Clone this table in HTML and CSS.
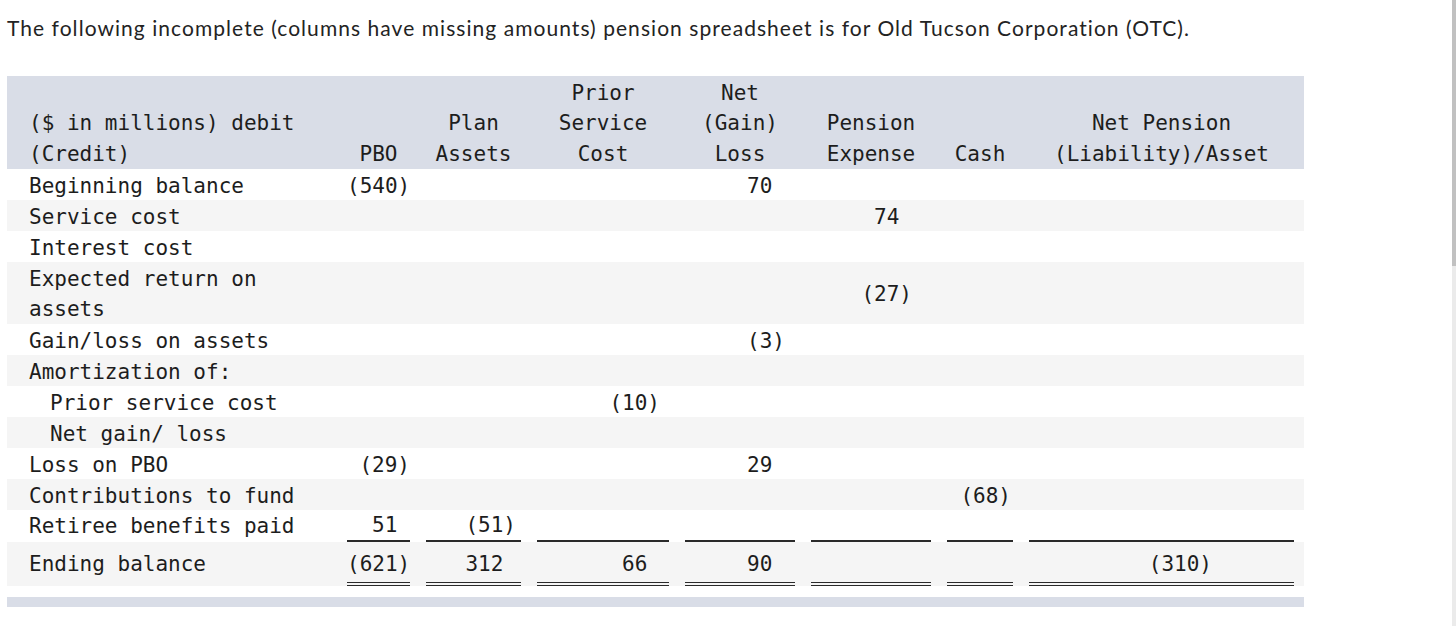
FILE: index.html
```html
<!DOCTYPE html>
<html lang="en">
<head>
<meta charset="utf-8">
<title>OTC pension spreadsheet</title>
<link rel="stylesheet" href="styles.css">
</head>
<body>
<p class="intro">The following incomplete (columns have missing amounts) pension spreadsheet is for Old Tucson Corporation (OTC).</p>
<table class="sheet">
  <colgroup>
    <col class="w-label"><col class="w-pbo"><col class="w-plan"><col class="w-psc"><col class="w-ngl"><col class="w-pe"><col class="w-cash"><col class="w-npl">
  </colgroup>
  <thead>
    <tr>
      <th class="lab">($ in millions) debit (Credit)</th>
      <th>PBO</th>
      <th>Plan Assets</th>
      <th>Prior Service Cost</th>
      <th>Net (Gain) Loss</th>
      <th>Pension Expense</th>
      <th>Cash</th>
      <th>Net Pension (Liability)/Asset</th>
    </tr>
  </thead>
  <tbody>
    <tr>
      <td class="lab">Beginning balance</td>
      <td><div class="v">(540)</div></td><td><div class="v"></div></td><td><div class="v"></div></td>
      <td><div class="v p">70</div></td><td><div class="v"></div></td><td><div class="v"></div></td><td><div class="v"></div></td>
    </tr>
    <tr>
      <td class="lab">Service cost</td>
      <td><div class="v"></div></td><td><div class="v"></div></td><td><div class="v"></div></td>
      <td><div class="v"></div></td><td><div class="v p">74</div></td><td><div class="v"></div></td><td><div class="v"></div></td>
    </tr>
    <tr>
      <td class="lab">Interest cost</td>
      <td><div class="v"></div></td><td><div class="v"></div></td><td><div class="v"></div></td>
      <td><div class="v"></div></td><td><div class="v"></div></td><td><div class="v"></div></td><td><div class="v"></div></td>
    </tr>
    <tr>
      <td class="lab two">Expected return on assets</td>
      <td><div class="v"></div></td><td><div class="v"></div></td><td><div class="v"></div></td>
      <td><div class="v"></div></td><td><div class="v">(27)</div></td><td><div class="v"></div></td><td><div class="v"></div></td>
    </tr>
    <tr>
      <td class="lab">Gain/loss on assets</td>
      <td><div class="v"></div></td><td><div class="v"></div></td><td><div class="v"></div></td>
      <td><div class="v">(3)</div></td><td><div class="v"></div></td><td><div class="v"></div></td><td><div class="v"></div></td>
    </tr>
    <tr>
      <td class="lab">Amortization of:</td>
      <td><div class="v"></div></td><td><div class="v"></div></td><td><div class="v"></div></td>
      <td><div class="v"></div></td><td><div class="v"></div></td><td><div class="v"></div></td><td><div class="v"></div></td>
    </tr>
    <tr>
      <td class="lab sub">Prior service cost</td>
      <td><div class="v"></div></td><td><div class="v"></div></td><td><div class="v">(10)</div></td>
      <td><div class="v"></div></td><td><div class="v"></div></td><td><div class="v"></div></td><td><div class="v"></div></td>
    </tr>
    <tr>
      <td class="lab sub">Net gain/ loss</td>
      <td><div class="v"></div></td><td><div class="v"></div></td><td><div class="v"></div></td>
      <td><div class="v"></div></td><td><div class="v"></div></td><td><div class="v"></div></td><td><div class="v"></div></td>
    </tr>
    <tr>
      <td class="lab">Loss on PBO</td>
      <td><div class="v">(29)</div></td><td><div class="v"></div></td><td><div class="v"></div></td>
      <td><div class="v p">29</div></td><td><div class="v"></div></td><td><div class="v"></div></td><td><div class="v"></div></td>
    </tr>
    <tr>
      <td class="lab">Contributions to fund</td>
      <td><div class="v"></div></td><td><div class="v"></div></td><td><div class="v"></div></td>
      <td><div class="v"></div></td><td><div class="v"></div></td><td><div class="v">(68)</div></td><td><div class="v"></div></td>
    </tr>
    <tr class="single">
      <td class="lab">Retiree benefits paid</td>
      <td><div class="v p">51</div></td><td><div class="v">(51)</div></td><td><div class="v"></div></td>
      <td><div class="v"></div></td><td><div class="v"></div></td><td><div class="v"></div></td><td><div class="v"></div></td>
    </tr>
    <tr class="double">
      <td class="lab">Ending balance</td>
      <td><div class="v">(621)</div></td><td><div class="v p">312</div></td><td><div class="v p">66</div></td>
      <td><div class="v p">90</div></td><td><div class="v"></div></td><td><div class="v"></div></td><td><div class="v">(310)</div></td>
    </tr>
  </tbody>
</table>
<div class="sheet-foot"></div>
<div class="scrollbar"><div class="scrollbar-thumb"></div></div>
</body>
</html>
```
FILE: styles.css
```css
html, body {
  margin: 0;
  padding: 0;
  background: #ffffff;
}

body {
  padding: 0 7px;
  color: #1d1d1d;
}

.intro {
  margin: 16px 0 36px;
  font-family: Lato, "Open Sans", sans-serif;
  font-size: 21px;
  letter-spacing: 1.05px;
  line-height: 24px;
  color: #232323;
}

.sheet {
  width: 1297px;
  table-layout: fixed;
  border-collapse: collapse;
  border-spacing: 0;
  font-family: "DejaVu Sans Mono", "Liberation Mono", monospace;
  font-size: 21px;
  line-height: 28px;
  color: #1d1d1d;
}

.w-label { width: 332px; }
.w-pbo { width: 79px; }
.w-plan { width: 111px; }
.w-psc { width: 148px; }
.w-ngl { width: 126px; }
.w-pe { width: 136px; }
.w-cash { width: 82px; }
.w-npl { width: 283px; }

.sheet thead tr {
  background: #d9dde7;
}

.sheet th {
  font-weight: normal;
  vertical-align: bottom;
  text-align: center;
  padding: 2px 8px 0;
  line-height: 30.33px;
}

.sheet th:last-child {
  padding-right: 10px;
}

.sheet th.lab {
  text-align: left;
  padding: 2px 0 0 22px;
}

.sheet td {
  padding: 3px 8px 0;
  vertical-align: middle;
  white-space: nowrap;
}

.sheet td.lab {
  text-align: left;
  white-space: normal;
  padding: 3px 0 0 22px;
}

.sheet td.two {
  padding-top: 2px;
  line-height: 30px;
}

.sheet td.sub {
  padding-left: 43px;
}

.sheet td:last-child {
  padding-right: 10px;
}

.sheet tbody tr:nth-child(even) {
  background: #f5f5f5;
}

.sheet tbody tr {
  height: 31px;
}

.v {
  text-align: right;
}

.v:empty::before {
  content: "\00a0";
}

.v.p::after {
  content: "\00a0";
}

td:nth-child(2) .v { padding-right: 0; }
td:nth-child(3) .v { padding-right: 5px; }
td:nth-child(4) .v { padding-right: 9px; }
td:nth-child(5) .v { padding-right: 10px; }
td:nth-child(6) .v { padding-right: 19px; }
td:nth-child(7) .v { padding-right: 2px; }
td:nth-child(8) .v { padding-right: 82px; }

.sheet tr.single td {
  padding-top: 0;
}

.sheet tr.single td:not(.lab) .v {
  line-height: 30px;
  border-bottom: 2px solid #2a2a2a;
}

.sheet tr.single td.lab {
  line-height: 32px;
}

.sheet tr.double td {
  vertical-align: top;
  padding-top: 4px;
}

.sheet tr.double td.lab {
  line-height: 36px;
}

.sheet tr.double td:not(.lab) .v {
  line-height: 36px;
  border-bottom: 4px double #2a2a2a;
}

.sheet-foot {
  width: 1297px;
  height: 10px;
  margin-top: 11px;
  background: #d9dde7;
}

.scrollbar {
  position: fixed;
  top: 0;
  right: 0;
  width: 4px;
  height: 100%;
  background: #ebebeb;
}

.scrollbar-thumb {
  height: 266px;
  background: #c1c1c1;
}
```
